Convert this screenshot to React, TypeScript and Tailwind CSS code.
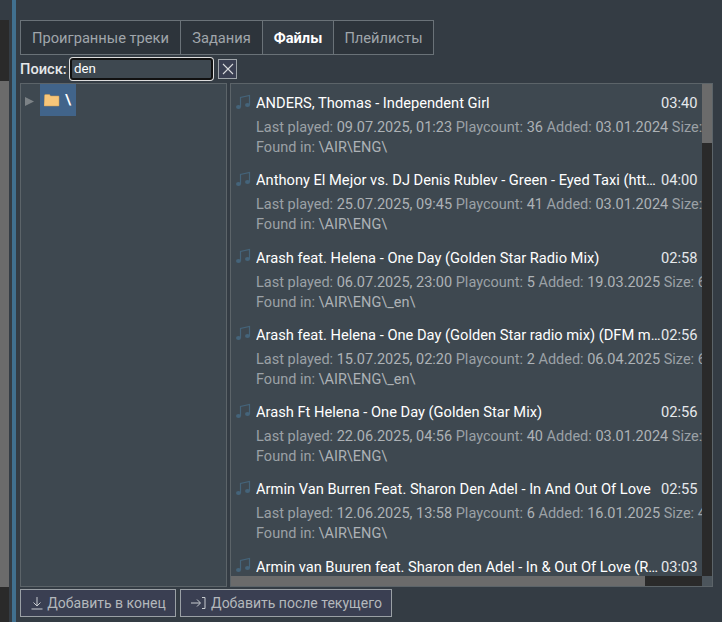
const tracks = [
  { title: "ANDERS, Thomas - Independent Girl", time: "03:40", played: "09.07.2025, 01:23", count: "36", added: "03.01.2024", size: "Size:", path: "\\AIR\\ENG\\" },
  { title: "Anthony El Mejor vs. DJ Denis Rublev - Green - Eyed Taxi (htt…", time: "04:00", played: "25.07.2025, 09:45", count: "41", added: "03.01.2024", size: "Size:", path: "\\AIR\\ENG\\" },
  { title: "Arash feat. Helena - One Day (Golden Star Radio Mix)", time: "02:58", played: "06.07.2025, 23:00", count: "5", added: "19.03.2025", size: "Size: 6", path: "\\AIR\\ENG\\_en\\" },
  { title: "Arash feat. Helena - One Day (Golden Star radio mix) (DFM m…", time: "02:56", played: "15.07.2025, 02:20", count: "2", added: "06.04.2025", size: "Size: 6", path: "\\AIR\\ENG\\_en\\" },
  { title: "Arash Ft Helena - One Day (Golden Star Mix)", time: "02:56", played: "22.06.2025, 04:56", count: "40", added: "03.01.2024", size: "Size:", path: "\\AIR\\ENG\\" },
  { title: "Armin Van Burren Feat. Sharon Den Adel - In And Out Of Love", time: "02:55", played: "12.06.2025, 13:58", count: "6", added: "16.01.2025", size: "Size: 4", path: "\\AIR\\ENG\\" },
];

function TrackRow({ title, time }: { title: string; time: string }) {
  return (
    <div className="flex items-center h-[20px] relative">
      <svg width="16" height="16" viewBox="0 0 16 16" fill="none" className="ml-[4px] mr-[5px] shrink-0 -mt-[3px]">
        <path d="M5.5 13V3.5L14.5 1.5V11" stroke="#45647a" strokeWidth="1.2" />
        <ellipse cx="3.5" cy="13" rx="2.5" ry="2" fill="#45647a" />
        <ellipse cx="12.5" cy="11" rx="2.5" ry="2" fill="#45647a" />
      </svg>
      <div className="w-[405px] shrink-0 whitespace-nowrap overflow-hidden text-white">{title}</div>
      <div className="text-[#e6e9ec] absolute left-[430px]">{time}</div>
    </div>
  );
}

export default function App() {
  return (
    <div className="w-[722px] h-[622px] overflow-hidden bg-[#343c44] flex font-['Roboto',sans-serif] text-[14.67px] leading-[20px]">
      <div className="w-[9px] h-full flex flex-col pt-[20px]">
        <div className="h-[61px] bg-[#2a2a2a]" />
        <div className="h-[506px] bg-[#6b6b6b]" />
        <div className="flex-1 bg-[#2a2a2a]" />
      </div>
      <div className="w-[4px] ml-[3px] h-full bg-[#41708f]" />
      <div className="ml-[4px] flex flex-col pt-[20px] w-[693px]">
        {/* вкладки */}
        <div className="flex h-[35px] w-[414px] border border-[#6a7278] bg-[#2d343b]">
          <div className="w-[160px] flex items-center justify-center text-[#a0a6ab] border-r border-[#6a7278]">Проигранные треки</div>
          <div className="w-[82px] flex items-center justify-center text-[#a0a6ab] border-r border-[#6a7278]">Задания</div>
          <div className="w-[71px] flex items-center justify-center font-bold text-white bg-[#343c44] border-r border-[#6a7278]">Файлы</div>
          <div className="flex-1 flex items-center justify-center text-[#a0a6ab]">Плейлисты</div>
        </div>

        {/* поиск */}
        <div className="flex items-center h-[24px] mt-[2px]">
          <span className="font-medium text-[#e6e8ea] w-[50px]">Поиск:</span>
          <div className="w-[143px] h-[22px] rounded-[3px] border-2 border-[#111] bg-[#3e4850] text-white text-[13.33px] pl-[2px] flex items-center shadow-[0_0_0_1px_#ddd]">den</div>
          <div className="ml-[5px] w-[19px] h-[20px] border border-[#a0a6ab] bg-[#3a3f52] flex items-center justify-center">
            <svg width="12" height="12" viewBox="0 0 12 12" stroke="#d8dadc" strokeWidth="1.1"><path d="M1 1l10 10M11 1L1 11" /></svg>
          </div>
        </div>

        {/* панели */}
        <div className="flex gap-[3px] mt-[2px] h-[504px]">
          <div className="w-[207px] border border-[#5c6469] bg-[#3e4850] flex items-start">
            <div className="w-[19px] h-[32px] flex items-center pl-[4px] pt-[3px]">
              <svg width="9" height="9" viewBox="0 0 9 9" fill="#7c8286"><path d="M0 0l9 4.5L0 9z" /></svg>
            </div>
            <div className="w-[36px] h-[32px] bg-[#41648a] flex items-center pl-[4px] gap-[5px]">
              <svg width="16" height="14" viewBox="0 0 16 14">
                <path d="M0.5 2.5q0-1 1-1h4l1 1.5h8q.5 0 .5.5v9q0 .5-.5.5h-14q-.5 0-.5-.5z" fill="#f6c67a" stroke="#c89a50" strokeWidth="0.5" />
              </svg>
              <span className="font-medium text-white">\</span>
            </div>
          </div>

          <div className="w-[483px] border border-[#5c6469] flex flex-col">
            <div className="flex flex-1 min-h-0">
              <div className="flex-1 bg-[#3e4850] overflow-hidden pt-[9px]">
                {tracks.map((t) => (
                  <div key={t.title + t.time} className="h-[77.3px]">
                    <TrackRow title={t.title} time={t.time} />
                    <div className="ml-[25px] mt-[5px] text-[14.5px] whitespace-nowrap overflow-hidden text-[#9ba1a6]">
                      Last played: <span className="text-[#adb2b6]">{t.played}</span> Playcount: <span className="text-[#adb2b6]">{t.count}</span> Added: <span className="text-[#adb2b6]">{t.added}</span> {t.size}
                    </div>
                    <div className="ml-[25px] text-[14.5px] whitespace-nowrap text-[#9ba1a6]">Found in: <span className="text-[#adb2b6]">{t.path}</span></div>
                  </div>
                ))}
                <TrackRow title="Armin van Buuren feat. Sharon den Adel - In & Out Of Love (R…" time="03:03" />
              </div>
              <div className="w-[10px] bg-[#2a2a2a]">
                <div className="h-[59px] bg-[#6b6b6b]" />
              </div>
            </div>
            <div className="flex h-[10px]">
              <div className="w-[414px] bg-[#6b6b6b]" />
              <div className="flex-1 bg-[#2a2a2a]" />
              <div className="w-[10px] bg-[#4c555c]" />
            </div>
          </div>
        </div>

        {/* кнопки */}
        <div className="flex gap-[4px] mt-[2px] text-[14px]">
          <div className="w-[156px] h-[28px] border border-[#9aa0a5] bg-[#3a3f52] flex items-center justify-center gap-[3px] text-[#b4b8bc]">
            <svg width="14" height="14" viewBox="0 0 14 14" fill="none" stroke="#c8ccd0" strokeWidth="1"><path d="M7 1v9M3.5 6.5L7 10l3.5-3.5M1.5 13h11" /></svg>
            Добавить в конец
          </div>
          <div className="w-[212px] h-[28px] border border-[#9aa0a5] bg-[#3a3f52] flex items-center justify-center gap-[5px] text-[#b4b8bc]">
            <svg width="16" height="14" viewBox="0 0 16 14" fill="none" stroke="#c8ccd0" strokeWidth="1"><path d="M1 7h9M7 3.5L10.5 7 7 10.5M12 1.5h3v11h-3" /></svg>
            Добавить после текущего
          </div>
        </div>
      </div>
    </div>
  );
}
